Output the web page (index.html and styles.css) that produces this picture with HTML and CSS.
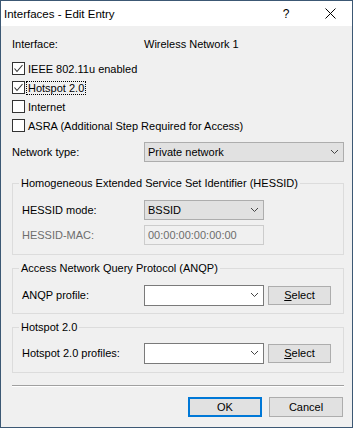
FILE: index.html
```html
<!DOCTYPE html>
<html lang="en">
<head>
  <meta charset="UTF-8">
  <meta name="viewport" content="width=device-width, initial-scale=1.0">
  <title>Interfaces - Edit Entry</title>
  <link rel="stylesheet" href="styles.css">
</head>
<body>
  <div class="window">
    <div class="titlebar">
      <span class="title">Interfaces - Edit Entry</span>
      <span class="caption-btn">?</span>
      <span class="caption-btn">
        <svg width="11" height="11" viewBox="0 0 11 11"><path d="M0.5 0.5 L10.5 10.5 M10.5 0.5 L0.5 10.5" stroke="#000" stroke-width="1" fill="none"/></svg>
      </span>
    </div>

    <div class="content">
      <div class="row info">
        <span class="label">Interface:</span>
        <span>Wireless Network 1</span>
      </div>

      <div class="checks">
        <div class="check">
          <span class="box"><svg width="11" height="11" viewBox="0 0 11 11"><path d="M1.5 5.5 L4 8.5 L9.5 2" stroke="#333" stroke-width="1.1" fill="none"/></svg></span>
          <span>IEEE 802.11u enabled</span>
        </div>
        <div class="check">
          <span class="box"><svg width="11" height="11" viewBox="0 0 11 11"><path d="M1.5 5.5 L4 8.5 L9.5 2" stroke="#333" stroke-width="1.1" fill="none"/></svg></span>
          <span class="focus">Hotspot 2.0</span>
        </div>
        <div class="check">
          <span class="box"></span>
          <span>Internet</span>
        </div>
        <div class="check">
          <span class="box"></span>
          <span>ASRA (Additional Step Required for Access)</span>
        </div>
      </div>

      <div class="row">
        <span class="label">Network type:</span>
        <div class="dropdown">
          <span>Private network</span>
          <svg width="7" height="4" viewBox="0 0 7 4"><path d="M0 0 L3.5 3.5 L7 0" stroke="#444" stroke-width="1" fill="none"/></svg>
        </div>
      </div>

      <fieldset class="group first">
        <legend>Homogeneous Extended Service Set Identifier (HESSID)</legend>
        <div class="row inner">
          <span class="label">HESSID mode:</span>
          <div class="dropdown short">
            <span>BSSID</span>
            <svg width="7" height="4" viewBox="0 0 7 4"><path d="M0 0 L3.5 3.5 L7 0" stroke="#444" stroke-width="1" fill="none"/></svg>
          </div>
        </div>
        <div class="row inner disabled">
          <span class="label">HESSID-MAC:</span>
          <div class="textbox">00:00:00:00:00:00</div>
        </div>
      </fieldset>

      <fieldset class="group">
        <legend>Access Network Query Protocol (ANQP)</legend>
        <div class="row inner">
          <span class="label">ANQP profile:</span>
          <div class="combo">
            <span></span>
            <svg width="7" height="4" viewBox="0 0 7 4"><path d="M0 0 L3.5 3.5 L7 0" stroke="#444" stroke-width="1" fill="none"/></svg>
          </div>
          <button class="btn small"><u>S</u>elect</button>
        </div>
      </fieldset>

      <fieldset class="group last">
        <legend>Hotspot 2.0</legend>
        <div class="row inner">
          <span class="label">Hotspot 2.0 profiles:</span>
          <div class="combo">
            <span></span>
            <svg width="7" height="4" viewBox="0 0 7 4"><path d="M0 0 L3.5 3.5 L7 0" stroke="#444" stroke-width="1" fill="none"/></svg>
          </div>
          <button class="btn small"><u>S</u>elect</button>
        </div>
      </fieldset>

      <div class="separator"></div>

      <div class="buttons">
        <button class="btn default">OK</button>
        <button class="btn">Cancel</button>
      </div>
    </div>
  </div>
</body>
</html>
```

FILE: styles.css
```css
body {
  margin: 0;
  padding: 0;
  font-family: "Liberation Sans", Arial, sans-serif;
  font-size: 11px;
  color: #000;
  background: #fff;
}
.window {
  width: 353px;
  height: 428px;
  box-sizing: border-box;
  border: 1px solid #3c5874;
  display: flex;
  flex-direction: column;
}
.titlebar {
  height: 25px;
  background: #fff;
  display: flex;
  align-items: center;
  padding-left: 3px;
}
.title {
  flex: 1;
  font-size: 11.5px;
}
.caption-btn {
  width: 44px;
  height: 25px;
  display: flex;
  align-items: center;
  justify-content: center;
  font-size: 12px;
}
.content {
  flex: 1;
  background: #f0f0f0;
  padding: 8px 8px 0 11px;
}
.row {
  display: flex;
  align-items: center;
  height: 20px;
}
.label {
  width: 132px;
  flex-shrink: 0;
}
.row.inner .label {
  width: 122px;
}
.checks {
  margin-top: 5px;
  margin-bottom: 7px;
}
.check {
  height: 19px;
  display: flex;
  align-items: center;
}
.box {
  width: 11px;
  height: 11px;
  border: 1px solid #333;
  background: #fff;
  margin-right: 3px;
  display: flex;
}
.focus {
  outline: 1px dotted #000;
  outline-offset: 0;
  padding: 0 1px;
  margin-left: -1px;
}
.dropdown, .combo, .textbox {
  box-sizing: border-box;
  height: 20px;
  display: flex;
  align-items: center;
  justify-content: space-between;
  padding: 0 5px 0 3px;
}
.dropdown {
  flex: 1;
  background: #e1e1e1;
  border: 1px solid #adadad;
}
.dropdown.short {
  flex: none;
  width: 120px;
}
.combo {
  width: 120px;
  height: 21px;
  background: #fff;
  border: 1px solid #7a7a7a;
}
.textbox {
  width: 120px;
  background: #f0f0f0;
  border: 1px solid #cccccc;
  color: #6d6d6d;
}
.disabled .label {
  color: #6d6d6d;
}
.row.disabled {
  margin-top: 5px;
}
.group {
  margin: 0;
  min-width: 0;
  border: 1px solid #dcdcdc;
  padding: 10px 9px 8px 9px;
}
.group legend {
  padding: 0 2px;
  margin-left: -3px;
  line-height: 14px;
}
.group.first {
  margin-top: 14px;
  padding-bottom: 9px;
}
.group + .group {
  margin-top: 6px;
}
.group.last {
  padding-top: 9px;
  padding-bottom: 9px;
}
.btn {
  font-family: "Liberation Sans", Arial, sans-serif;
  font-size: 11px;
  color: #000;
  background: #e1e1e1;
  border: 1px solid #adadad;
  padding: 0;
  width: 74px;
  height: 20px;
}
.btn.small {
  width: 63px;
  height: 19px;
  margin-left: 4px;
}
.btn.default {
  border: 2px solid #0078d7;
}
.separator {
  margin-top: 12px;
  border-top: 1px solid #a0a0a0;
  border-bottom: 1px solid #fff;
}
.buttons {
  margin-top: 10px;
  display: flex;
  justify-content: flex-end;
  gap: 7px;
  padding-right: 1px;
}
```
